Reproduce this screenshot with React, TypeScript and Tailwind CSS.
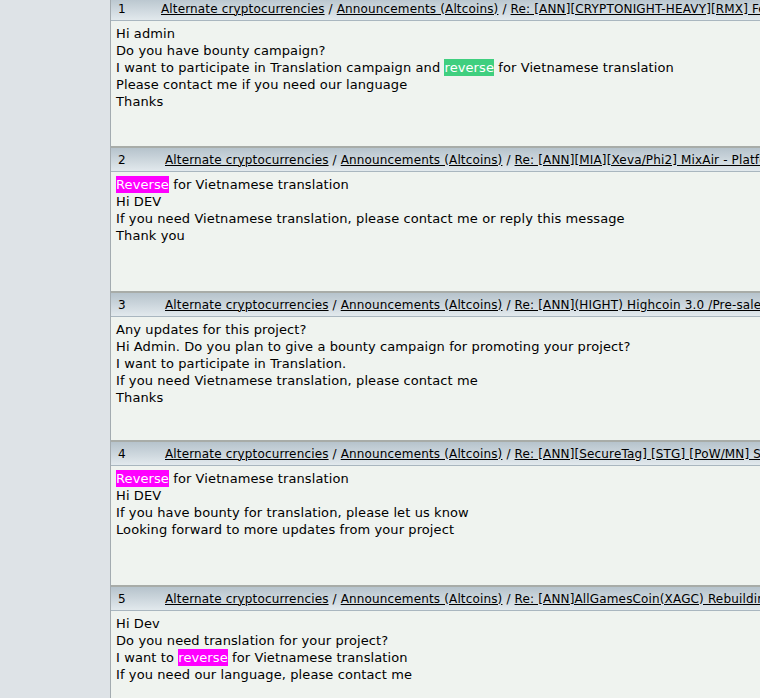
import React from "react"

type Post = {
  num: number
  topic: string
  numWidth: string
  bodyHeight: string
  lines: React.ReactNode[]
}

const Green = ({ children }: { children: React.ReactNode }) => (
  <span className="inline-block leading-[17px] bg-[#3fcf7f] text-white">{children}</span>
)

const Pink = ({ children }: { children: React.ReactNode }) => (
  <span className="inline-block leading-[17px] bg-[#ff00ff] text-white">{children}</span>
)

const posts: Post[] = [
  {
    num: 1,
    topic: "Re: [ANN][CRYPTONIGHT-HEAVY][RMX] Ferm",
    numWidth: "w-[50px]",
    bodyHeight: "h-[125px]",
    lines: [
      "Hi admin",
      "Do you have bounty campaign?",
      <>I want to participate in Translation campaign and <Green>reverse</Green> for Vietnamese translation</>,
      "Please contact me if you need our language",
      "Thanks",
    ],
  },
  {
    num: 2,
    topic: "Re: [ANN][MIA][Xeva/Phi2] MixAir - Platform",
    numWidth: "w-[54px]",
    bodyHeight: "h-[119px]",
    lines: [
      <><Pink>Reverse</Pink> for Vietnamese translation</>,
      "Hi DEV",
      "If you need Vietnamese translation, please contact me or reply this message",
      "Thank you",
    ],
  },
  {
    num: 3,
    topic: "Re: [ANN](HIGHT) Highcoin 3.0 /Pre-sale",
    numWidth: "w-[54px]",
    bodyHeight: "h-[123px]",
    lines: [
      "Any updates for this project?",
      "Hi Admin. Do you plan to give a bounty campaign for promoting your project?",
      "I want to participate in Translation.",
      "If you need Vietnamese translation, please contact me",
      "Thanks",
    ],
  },
  {
    num: 4,
    topic: "Re: [ANN][SecureTag] [STG] [PoW/MN] Secure",
    numWidth: "w-[54px]",
    bodyHeight: "h-[119px]",
    lines: [
      <><Pink>Reverse</Pink> for Vietnamese translation</>,
      "Hi DEV",
      "If you have bounty for translation, please let us know",
      "Looking forward to more updates from your project",
    ],
  },
  {
    num: 5,
    topic: "Re: [ANN]AllGamesCoin(XAGC) Rebuilding",
    numWidth: "w-[54px]",
    bodyHeight: "h-[120px]",
    lines: [
      "Hi Dev",
      "Do you need translation for your project?",
      <>I want to <Pink>reverse</Pink> for Vietnamese translation</>,
      "If you need our language, please contact me",
    ],
  },
]

function PostBlock({ post }: { post: Post }) {
  return (
    <div>
      <div className="h-[2px] bg-[#a8aca8]" />
      <div className="flex items-center h-[24px] bg-gradient-to-b from-[#b6c3cc] to-[#e2e9ed] border-b border-[#a9b6bf] text-[12px] tracking-[0.15px] text-black whitespace-nowrap">
        <div className={`${post.numWidth} pl-[7px] shrink-0`}>{post.num}</div>
        <div>
          <span className="underline">Alternate cryptocurrencies</span>
          {" / "}
          <span className="underline">Announcements (Altcoins)</span>
          {" / "}
          <span className="underline">{post.topic}</span>
        </div>
      </div>
      <div className={`${post.bodyHeight} bg-[#eff3ef] pl-[5px] pt-[4px] text-[13px] leading-[17px] tracking-[0.1px] text-black whitespace-nowrap`}>
        {post.lines.map((line, i) => (
          <div key={i} className="h-[17px]">{line}</div>
        ))}
      </div>
    </div>
  )
}

export default function App() {
  return (
    <div className="flex h-[698px] w-[760px] overflow-hidden bg-[#dee3e7] font-['DejaVu_Sans',Verdana,sans-serif]">
      <div className="w-[110px] shrink-0 bg-[#dee3e7]" />
      <div className="w-[1px] shrink-0 bg-[#a3abb0]" />
      <div className="flex-1 overflow-hidden">
        <div className="-mt-[5px] w-[900px]">
          {posts.map((p) => (
            <PostBlock key={p.num} post={p} />
          ))}
        </div>
      </div>
    </div>
  )
}
